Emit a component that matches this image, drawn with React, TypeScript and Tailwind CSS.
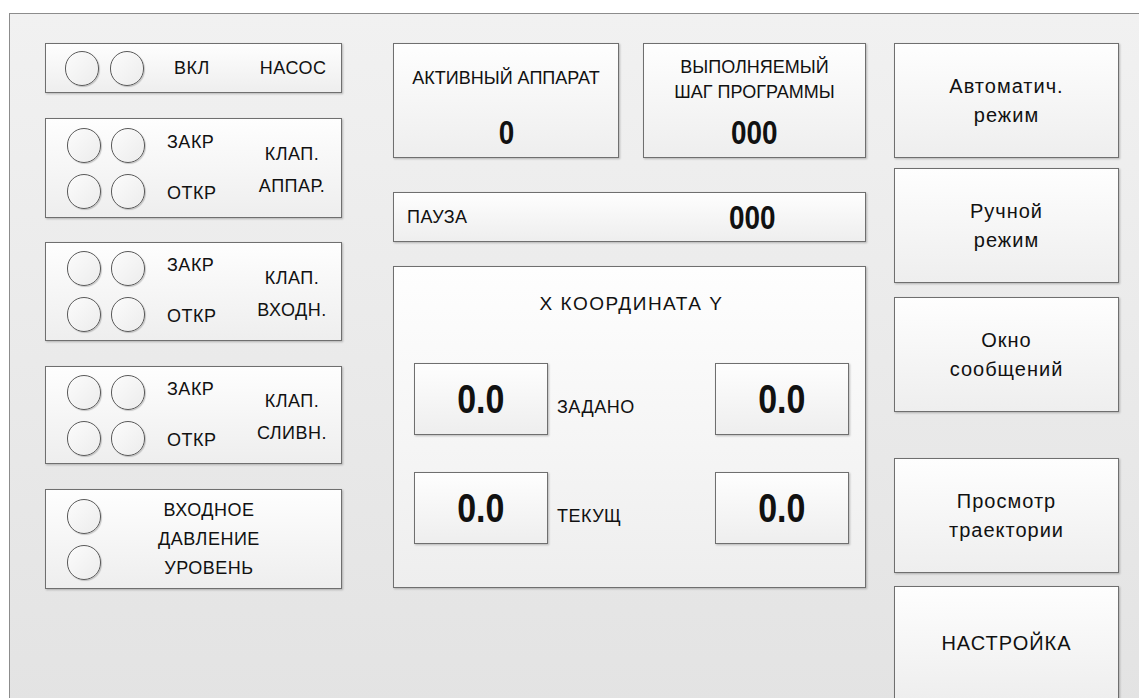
import React from "react";

const font = { fontFamily: '"Liberation Sans", Arial, sans-serif' };

const boxCls =
  "border border-[#6f6f6f] bg-gradient-to-b from-[#fefefe] to-[#eeeeee] shadow-[1px_1px_2px_rgba(0,0,0,0.25)]";

const Lamp = () => (
  <div className="w-[34px] h-[35px] rounded-full border border-[#5a5a5a] bg-gradient-to-br from-[#fcfcfc] to-[#ececec] shadow-[1px_1px_1px_rgba(0,0,0,0.2)]" />
);

// valve block: two rows of lamps with ЗАКР / ОТКР and a two-line name
const Valve = ({ name1, name2, h }: { name1: string; name2: string; h: string }) => (
  <div className={`${boxCls} ${h} flex items-center pl-[21px]`}>
    <div className="flex flex-col gap-[11px]">
      <div className="flex items-center gap-[10px]">
        <Lamp />
        <Lamp />
        <span className="ml-[12px] text-[18px] tracking-[0.5px] -mt-[6px]">ЗАКР</span>
      </div>
      <div className="flex items-center gap-[10px]">
        <Lamp />
        <Lamp />
        <span className="ml-[12px] text-[18px] tracking-[0.5px] pt-[4px]">ОТКР</span>
      </div>
    </div>
    <div className="ml-auto mr-[4px] w-[90px] flex flex-col items-center text-[18px] leading-[32px] tracking-[0.5px] pt-[4px]">
      <span>{name1}</span>
      <span>{name2}</span>
    </div>
  </div>
);

const SideButton = ({ children, cls }: { children: React.ReactNode; cls: string }) => (
  <div className={`${boxCls} ${cls} w-[225px] h-[115px] flex flex-col items-center justify-center text-[20px] leading-[29px] tracking-[1px]`}>
    {children}
  </div>
);

const Readout = ({ v }: { v: string }) => (
  <div className={`${boxCls} w-[134px] h-[72px] flex items-center justify-center`}>
    <span className="inline-block text-[40px] font-bold leading-none scale-x-[0.85]">{v}</span>
  </div>
);

const Counter = ({ v, cls }: { v: string; cls: string }) => (
  <span className={`${cls} inline-block text-[34px] font-bold leading-none scale-x-[0.82]`}>{v}</span>
);

export default function App() {
  return (
    <div className="w-[1139px] h-[698px] overflow-hidden bg-white text-[#111]" style={font}>
      <div className="ml-[9px] mt-[13px] w-[1140px] h-[700px] border border-[#8c8c8c] bg-gradient-to-b from-[#f1f1f1] to-[#e3e3e3] flex pl-[35px] pt-[29px]">
        {/* left column: pump and valves */}
        <div className="w-[297px] flex flex-col">
          <div className={`${boxCls} h-[50px] flex items-center pl-[19px]`}>
            <div className="flex gap-[11px]">
              <Lamp />
              <Lamp />
            </div>
            <span className="ml-[30px] text-[18px] tracking-[0.5px]">ВКЛ</span>
            <span className="ml-[50px] text-[18px] tracking-[0.5px]">НАСОС</span>
          </div>
          <div className="mt-[25px]">
            <Valve name1="КЛАП." name2="АППАР." h="h-[100px]" />
          </div>
          <div className="mt-[24px]">
            <Valve name1="КЛАП." name2="ВХОДН." h="h-[99px]" />
          </div>
          <div className="mt-[25px]">
            <Valve name1="КЛАП." name2="СЛИВН." h="h-[98px]" />
          </div>
          <div className={`${boxCls} mt-[25px] h-[100px] flex items-center pl-[21px]`}>
            <div className="flex flex-col gap-[11px]">
              <Lamp />
              <Lamp />
            </div>
            <div className="flex-1 flex flex-col items-center text-[18px] leading-[29px] tracking-[0.5px] pr-[24px]">
              <span>ВХОДНОЕ</span>
              <span>ДАВЛЕНИЕ</span>
              <span>УРОВЕНЬ</span>
            </div>
          </div>
        </div>

        {/* middle column: status and coordinates */}
        <div className="ml-[51px] w-[473px] flex flex-col">
          <div className="flex gap-[24px]">
            <div className={`${boxCls} w-[226px] h-[115px] flex flex-col items-center pt-[20px]`}>
              <span className="text-[18px] leading-[28px] whitespace-nowrap">АКТИВНЫЙ АППАРАТ</span>
              <Counter v="0" cls="mt-[23px]" />
            </div>
            <div className={`${boxCls} w-[223px] h-[115px] flex flex-col items-center pt-[11px]`}>
              <span className="text-[18px] leading-[25px] whitespace-nowrap">ВЫПОЛНЯЕМЫЙ</span>
              <span className="text-[18px] leading-[25px] whitespace-nowrap">ШАГ ПРОГРАММЫ</span>
              <Counter v="000" cls="mt-[10px]" />
            </div>
          </div>
          <div className={`${boxCls} mt-[34px] h-[50px] flex items-center pl-[13px]`}>
            <span className="text-[18px] tracking-[0.5px]">ПАУЗА</span>
            <Counter v="000" cls="ml-[256px]" />
          </div>
          <div className={`${boxCls} mt-[24px] h-[322px] flex flex-col pl-[20px] pr-[16px]`}>
            <div className="mt-[23px] text-center text-[19px] tracking-[1.5px]">X КООРДИНАТА Y</div>
            <div className="mt-[44px] flex items-center">
              <Readout v="0.0" />
              <span className="ml-[9px] mt-[18px] text-[18px] tracking-[0.5px]">ЗАДАНО</span>
              <div className="ml-auto">
                <Readout v="0.0" />
              </div>
            </div>
            <div className="mt-[37px] flex items-center">
              <Readout v="0.0" />
              <span className="ml-[9px] mt-[18px] text-[18px] tracking-[0.5px]">ТЕКУЩ</span>
              <div className="ml-auto">
                <Readout v="0.0" />
              </div>
            </div>
          </div>
        </div>

        {/* right column: mode buttons */}
        <div className="ml-[28px] flex flex-col">
          <SideButton cls="">
            <span>Автоматич.</span>
            <span>режим</span>
          </SideButton>
          <SideButton cls="mt-[10px]">
            <span>Ручной</span>
            <span>режим</span>
          </SideButton>
          <SideButton cls="mt-[14px]">
            <span>Окно</span>
            <span>сообщений</span>
          </SideButton>
          <SideButton cls="mt-[46px]">
            <span>Просмотр</span>
            <span>траектории</span>
          </SideButton>
          <SideButton cls="mt-[13px]">
            <span>НАСТРОЙКА</span>
          </SideButton>
        </div>
      </div>
    </div>
  );
}
